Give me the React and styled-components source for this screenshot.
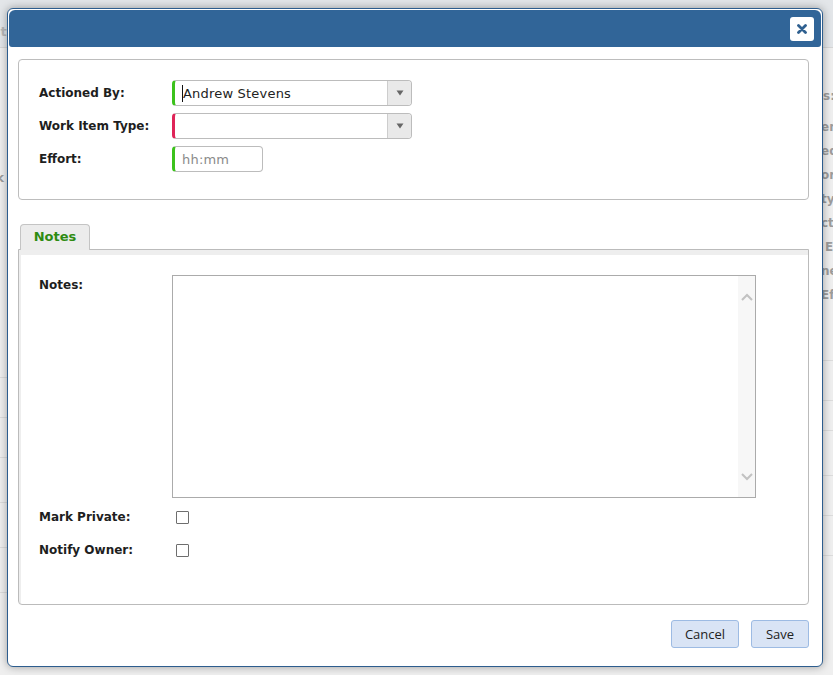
import React from "react";
import styled, { createGlobalStyle } from "styled-components";

const GlobalStyle = createGlobalStyle`
  html, body { margin: 0; padding: 0; }
  body {
    width: 833px;
    height: 675px;
    overflow: hidden;
    background: #ececec;
    font-family: "DejaVu Sans", Verdana, sans-serif;
  }
  * { box-sizing: border-box; }
`;

const Page = styled.div`
  position: relative;
  width: 833px;
  height: 675px;
  overflow: hidden;
  background: #efefef;
  display: flex;
  flex-direction: column;
`;

const BgHeader = styled.div`
  height: 48px;
  flex: none;
  background: #e3e6e9;
  border-bottom: 1px solid #d6d6d6;
  display: flex;
  align-items: center;
  padding-left: 0;
  font-size: 13px;
  font-weight: bold;
  color: #b8b8b8;
`;

const BgHeaderText = styled.span`
  margin-left: -4px;
  margin-top: 16px;
`;

const BgBody = styled.div`
  flex: 1;
  display: flex;
  justify-content: space-between;
`;

const BgSide = styled.div`
  width: ${(p) => p.$w}px;
  display: flex;
  flex-direction: column;
  align-items: flex-start;
  padding-top: ${(p) => p.$top}px;
  font-size: 12px;
  font-weight: bold;
  color: #9c9c9c;
  overflow: hidden;
  white-space: nowrap;
`;

const BgText = styled.div`
  height: 24px;
  line-height: 24px;
  margin-left: ${(p) => p.$shift || 0}px;
  margin-bottom: ${(p) => p.$mb || 0}px;
`;

const BgLine = styled.div`
  width: 100%;
  height: ${(p) => p.$gap}px;
  border-bottom: 1px solid #dcdcdc;
`;

const Modal = styled.div`
  position: absolute;
  left: 7px;
  top: 8px;
  width: 816px;
  height: 659px;
  background: #fff;
  border: 1px solid #2d5d8e;
  border-radius: 6px;
  padding: 1px;
  box-shadow: 0 0 9px rgba(0, 0, 0, 0.35);
  display: flex;
  flex-direction: column;
`;

const TitleBar = styled.div`
  height: 37px;
  flex: none;
  background: #316598;
  border-radius: 6px 6px 3px 3px;
  display: flex;
  justify-content: flex-end;
  align-items: center;
  padding-right: 7px;
`;

const CloseButton = styled.button`
  width: 24px;
  height: 24px;
  padding: 0;
  border: none;
  border-radius: 3px;
  background: #fff;
  display: flex;
  align-items: center;
  justify-content: center;
  cursor: pointer;
`;

const Body = styled.div`
  flex: 1;
  display: flex;
  flex-direction: column;
  padding: 12px 12px 0 9px;
`;

const FieldBox = styled.div`
  border: 1px solid #bdbdbd;
  border-radius: 4px;
  padding: 20px 20px 27px 20px;
  display: flex;
  flex-direction: column;
  gap: 7px;
`;

const Row = styled.div`
  display: flex;
  align-items: ${(p) => (p.$top ? "flex-start" : "center")};
  min-height: ${(p) => p.$h || 26}px;
`;

const Label = styled.label`
  width: 133px;
  flex: none;
  font-size: 12px;
  font-weight: bold;
  color: #1e1e1e;
  padding-top: ${(p) => p.$pt || 0}px;
`;

const SelectBox = styled.div`
  width: ${(p) => p.$w}px;
  height: 26px;
  border: 1px solid #bcbcbc;
  border-left: 3px solid ${(p) => p.$accent};
  border-radius: 4px;
  background: #fff;
  display: flex;
  align-items: stretch;
  overflow: hidden;
`;

const SelectValue = styled.div`
  flex: 1;
  display: flex;
  align-items: center;
  padding-left: 7px;
  font-size: 13px;
  color: #222;
  letter-spacing: 0.2px;
`;

const Placeholder = styled.span`
  color: #8a8a8a;
`;

const Caret = styled.span`
  display: inline-block;
  width: 1px;
  height: 17px;
  background: #111;
`;

const ArrowCell = styled.div`
  width: 24px;
  flex: none;
  background: #e9e9e9;
  border-left: 1px solid #cdcdcd;
  display: flex;
  align-items: center;
  justify-content: center;
`;

const Tabs = styled.div`
  margin-top: 24px;
  display: flex;
  flex-direction: column;
`;

const TabStrip = styled.div`
  display: flex;
  padding-left: 2px;
  margin-bottom: -1px;
  position: relative;
  z-index: 1;
`;

const Tab = styled.div`
  width: 70px;
  height: 26px;
  background: #ececec;
  border: 1px solid #c4c4c4;
  border-bottom: none;
  border-radius: 4px 4px 0 0;
  display: flex;
  align-items: center;
  justify-content: center;
  font-size: 13px;
  font-weight: bold;
  color: #2e8b12;
  padding-bottom: 2px;
`;

const TabPanel = styled.div`
  height: 356px;
  border: 1px solid #bbbbbb;
  border-radius: 0 0 4px 4px;
  box-shadow: inset 2px 5px 0 #eeeeee;
  padding: 25px 20px 0 20px;
  display: flex;
  flex-direction: column;
`;

const NotesArea = styled.div`
  width: 584px;
  height: 223px;
  border: 1px solid #ababab;
  display: flex;
  background: #fff;
`;

const TextArea = styled.textarea`
  flex: 1;
  border: none;
  outline: none;
  resize: none;
  font-family: "DejaVu Sans", sans-serif;
  font-size: 13px;
  padding: 4px;
`;

const ScrollTrack = styled.div`
  width: 17px;
  flex: none;
  background: #f7f7f7;
  display: flex;
  flex-direction: column;
  justify-content: space-between;
  align-items: center;
  padding: 17px 0 16px 0;
`;

const CheckRows = styled.div`
  margin-top: 9px;
  display: flex;
  flex-direction: column;
  gap: 13px;
`;

const Check = styled.input.attrs({ type: "checkbox" })`
  appearance: none;
  -webkit-appearance: none;
  width: 13px;
  height: 13px;
  margin: 0 0 0 4px;
  border: 1px solid #6e6e6e;
  border-radius: 1px;
  background: #fff;
`;

const Footer = styled.div`
  display: flex;
  justify-content: flex-end;
  gap: 12px;
  padding: 15px 0 0 0;
`;

const Button = styled.button`
  width: ${(p) => p.$w}px;
  height: 28px;
  background: #d9e4f5;
  border: 1px solid #9dbbe3;
  border-radius: 3px;
  font-family: "Open Sans", "Noto Sans", sans-serif;
  font-size: 13px;
  color: #222;
  padding: 0;
  cursor: pointer;
`;

const DownTriangle = () => (
  <svg width="8" height="6" viewBox="0 0 8 6">
    <path d="M0.5 0.5 L7.5 0.5 L4 5.5 Z" fill="#666" />
  </svg>
);

const Chevron = ({ up }) => (
  <svg width="12" height="8" viewBox="0 0 12 8">
    <polyline
      points={up ? "1,7 6,2 11,7" : "1,1 6,6 11,1"}
      fill="none"
      stroke="#c2c2c2"
      strokeWidth="2"
    />
  </svg>
);

const CloseIcon = () => (
  <svg width="10" height="10" viewBox="0 0 10 10">
    <path d="M1.5 1.5 L8.5 8.5 M8.5 1.5 L1.5 8.5" stroke="#2f6090" strokeWidth="2.8" strokeLinecap="round" />
  </svg>
);

export default function App() {
  return (
    <>
      <GlobalStyle />
      <Page>
        <BgHeader>
          <BgHeaderText>it</BgHeaderText>
        </BgHeader>
        <BgBody>
          <BgSide $w={20} $top={118}>
            <BgText $shift={-4}>k</BgText>
            <BgLine $gap={188} />
            <BgLine $gap={40} />
            <BgLine $gap={40} />
            <BgLine $gap={45} />
            <BgLine $gap={45} />
            <BgLine $gap={45} />
          </BgSide>
          <BgSide $w={12} $top={36}>
            <BgText $shift={2} $mb={7}>s:</BgText>
            <BgText>en</BgText>
            <BgText>ed</BgText>
            <BgText>or</BgText>
            <BgText>ty</BgText>
            <BgText>ct:</BgText>
            <BgText $shift={4}>E</BgText>
            <BgText>ne</BgText>
            <BgText>Ef</BgText>
            <BgLine $gap={54} />
            <BgLine $gap={40} />
            <BgLine $gap={30} />
            <BgLine $gap={45} />
            <BgLine $gap={40} />
            <BgLine $gap={40} />
          </BgSide>
        </BgBody>

        <Modal>
          <TitleBar>
            <CloseButton aria-label="Close">
              <CloseIcon />
            </CloseButton>
          </TitleBar>
          <Body>
            <FieldBox>
              <Row>
                <Label>Actioned By:</Label>
                <SelectBox $w={240} $accent="#3cc21c">
                  <SelectValue>
                    <Caret />
                    Andrew Stevens
                  </SelectValue>
                  <ArrowCell>
                    <DownTriangle />
                  </ArrowCell>
                </SelectBox>
              </Row>
              <Row>
                <Label>Work Item Type:</Label>
                <SelectBox $w={240} $accent="#df2458">
                  <SelectValue />
                  <ArrowCell>
                    <DownTriangle />
                  </ArrowCell>
                </SelectBox>
              </Row>
              <Row>
                <Label>Effort:</Label>
                <SelectBox $w={91} $accent="#3cc21c">
                  <SelectValue>
                    <Placeholder>hh:mm</Placeholder>
                  </SelectValue>
                </SelectBox>
              </Row>
            </FieldBox>

            <Tabs>
              <TabStrip>
                <Tab>Notes</Tab>
              </TabStrip>
              <TabPanel>
                <Row $top $h={223}>
                  <Label $pt={3}>Notes:</Label>
                  <NotesArea>
                    <TextArea />
                    <ScrollTrack>
                      <Chevron up />
                      <Chevron />
                    </ScrollTrack>
                  </NotesArea>
                </Row>
                <CheckRows>
                  <Row $h={20}>
                    <Label>Mark Private:</Label>
                    <Check />
                  </Row>
                  <Row $h={20}>
                    <Label>Notify Owner:</Label>
                    <Check />
                  </Row>
                </CheckRows>
              </TabPanel>
            </Tabs>

            <Footer>
              <Button $w={68}>Cancel</Button>
              <Button $w={58}>Save</Button>
            </Footer>
          </Body>
        </Modal>
      </Page>
    </>
  );
}
